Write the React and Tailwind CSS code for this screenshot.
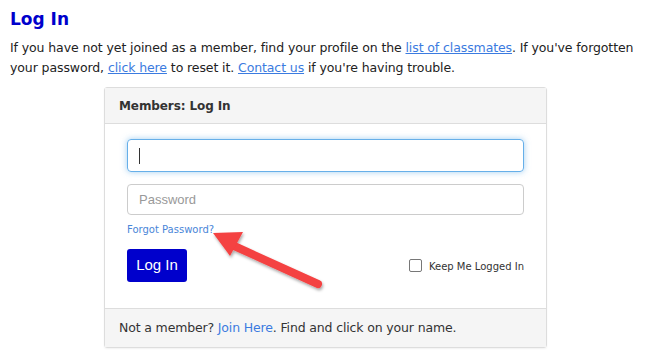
export default function App() {
  return (
    <div className="relative w-[646px] h-[363px] bg-white font-['DejaVu_Sans',Verdana,sans-serif] text-[#222]">
      <div className="px-[10px] pt-[8px]">
        <h1 className="text-[17px] font-bold text-[#0000cc] leading-[22px]">Log In</h1>
        <p className="mt-[8px] text-[12.5px] leading-[20px] tracking-[-0.1px]">
          If you have not yet joined as a member, find your profile on the{' '}
          <a className="text-[#3b7be0] underline">list of classmates</a>. If you've forgotten your password,{' '}
          <a className="text-[#3b7be0] underline">click here</a> to reset it.{' '}
          <a className="text-[#3b7be0] underline">Contact us</a> if you're having trouble.
        </p>

        <div className="ml-[94px] mt-[9px] w-[443px] rounded-[3px] border border-[#dddddd] shadow-[0_1px_2px_rgba(0,0,0,0.06)]">
          <div className="h-[36px] bg-[#f5f5f5] border-b border-[#dddddd] px-[14px] flex items-center">
            <span className="text-[12px] font-bold text-[#333] tracking-[-0.1px]">Members: Log In</span>
          </div>
          <div className="px-[22px] pt-[15px] pb-[26px]">
            <div className="h-[33px] rounded-[4px] border border-[#66afe9] shadow-[0_0_6px_rgba(102,175,233,0.6)] flex items-center px-[11px]">
              <span className="w-px h-[16px] bg-[#333]" />
            </div>
            <div className="mt-[12px] h-[31px] rounded-[4px] border border-[#cccccc] flex items-center px-[11px]">
              <span className="text-[13px] text-[#999] font-['Liberation_Sans',Arial,sans-serif]">Password</span>
            </div>
            <div className="mt-[8px] text-[10px] text-[#4a86d8] leading-[14px]">Forgot Password?</div>
            <div className="mt-[12px] flex items-center justify-between">
              <button className="w-[60px] h-[33px] rounded-[3px] bg-[#0000cc] text-white text-[15px] font-['Liberation_Sans',Arial,sans-serif]">
                Log In
              </button>
              <label className="flex items-center gap-[7px] mt-[2px]">
                <span className="w-[13px] h-[13px] mb-[3px] border border-[#777] rounded-[2px] bg-white" />
                <span className="text-[10px] text-[#333]">Keep Me Logged In</span>
              </label>
            </div>
          </div>
          <div className="h-[39px] bg-[#f5f5f5] border-t border-[#dddddd] px-[14px] flex items-center">
            <span className="text-[12.5px] text-[#333] tracking-[-0.15px]">
              Not a member? <a className="text-[#3b7be0]">Join Here</a>. Find and click on your name.
            </span>
          </div>
        </div>
      </div>

      <svg className="absolute left-0 top-0" width="646" height="363" viewBox="0 0 646 363">
        <defs>
          <filter id="sh" x="-20%" y="-20%" width="140%" height="140%">
            <feDropShadow dx="1" dy="2" stdDeviation="1.5" floodColor="#000" floodOpacity="0.35" />
          </filter>
        </defs>
        <g filter="url(#sh)">
          <line x1="318" y1="284" x2="232" y2="245" stroke="#f44242" strokeWidth="8" strokeLinecap="round" />
          <polygon points="213,233 243,232 230,256" fill="#f44242" />
        </g>
      </svg>
    </div>
  );
}
